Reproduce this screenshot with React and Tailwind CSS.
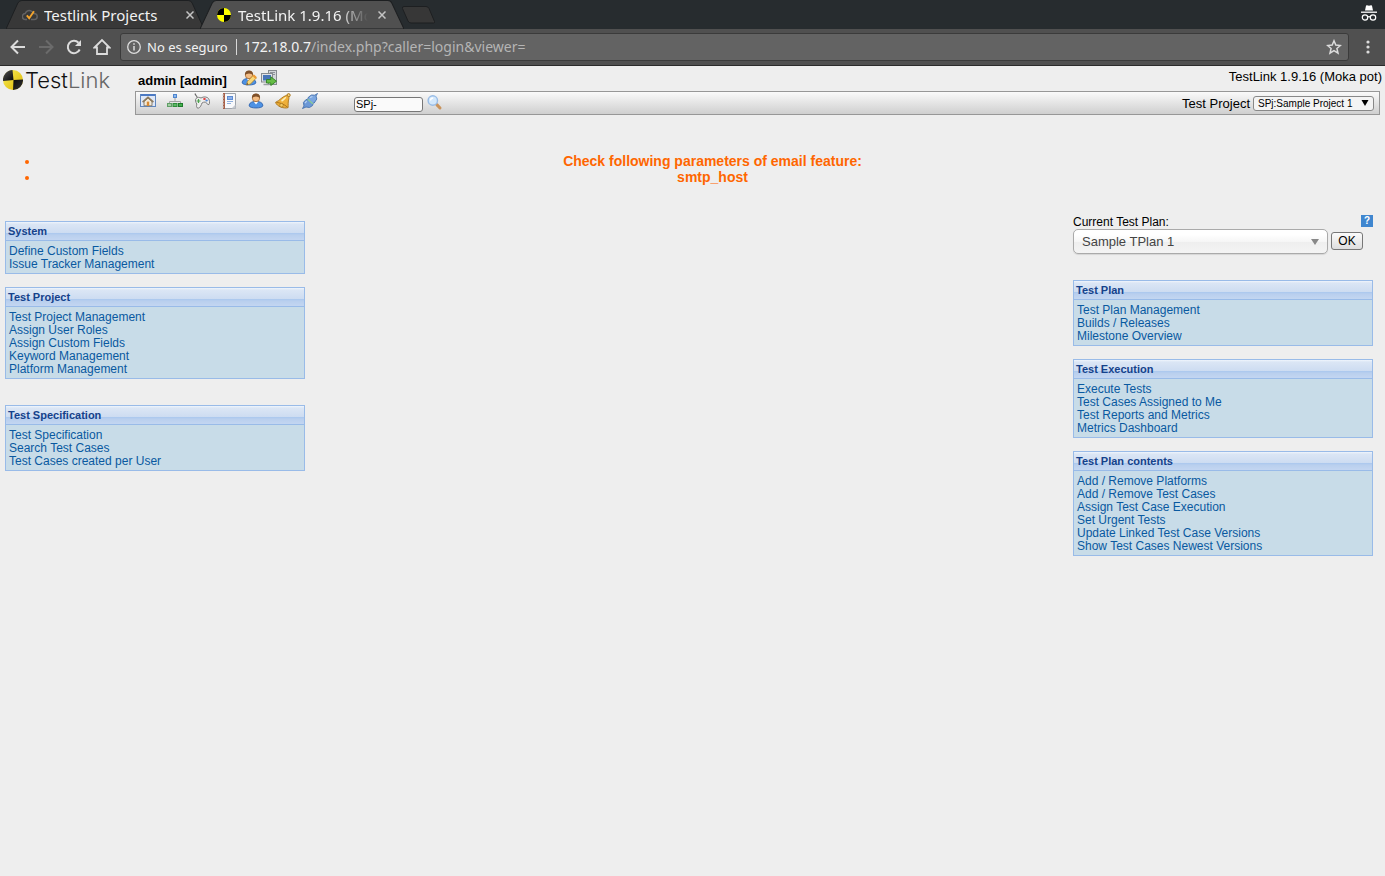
import React from 'react';

const icon = 'block h-4 w-4 shrink-0';

function HomeIcon() {
  return (
    <svg className={icon} viewBox="0 0 16 16">
      <rect x=".5" y="1.500" width="15" height="12" fill="#dfe8f7" stroke="#5f86bf" />
      <rect x="1" y="1" width="14" height="2" fill="#4c7ac4" />
      <path d="M4 8.500v4.300h8V8.500L8 5z" fill="#f3ead8" stroke="#7d7468" strokeWidth=".9" />
      <path d="M2.600 9.200L8 4.300l5.400 4.900" fill="none" stroke="#8d7a5e" strokeWidth="1.700" />
      <rect x="6.800" y="8.600" width="2.400" height="4.400" fill="#d98b34" />
    </svg>
  );
}
function TreeIcon() {
  return (
    <svg className={icon} viewBox="0 0 16 16">
      <path d="M8 5v3M2.500 10V8.500h11V10" fill="none" stroke="#a3a3a3" />
      <rect x="6.500" y="1.500" width="3" height="3" fill="#8db9ee" stroke="#4f86cf" />
      <rect x=".5" y="10.500" width="4" height="3" fill="#a3cda3" stroke="#5f9f66" />
      <rect x="6" y="10.500" width="4" height="3" fill="#5db965" stroke="#2f8c3b" />
      <rect x="11.500" y="10.500" width="4" height="3" fill="#43b04d" stroke="#1f7a2b" />
    </svg>
  );
}
function GamepadIcon() {
  return (
    <svg className={icon} viewBox="0 0 16 16">
      <path d="M3.500 5C3 3 1.500 2.500 1 .5" fill="none" stroke="#666" strokeWidth="1.100" />
      <path d="M2 5.500C3.500 3.800 5.500 4.300 7 5c2.500-1.700 6-1.300 7.500.5 1.300 2 1.400 4.700.5 6-1.400.8-2.300-1.500-3.500-2.500-1.500 0-2.600.3-3.500 1-.7 1.800-1.500 4.800-3.800 5.200-2.200 0-1.700-2.700-1.400-4.200C1.500 9 1 7 2 5.500z" fill="#eee" stroke="#7f7f7f" />
      <path d="M4.500 6v4M2.500 8h4" stroke="#4da34d" strokeWidth="1.200" />
      <ellipse cx="10.500" cy="6" rx="1.400" ry="1" fill="#e33b3b" />
      <ellipse cx="12.600" cy="7.500" rx="1.200" ry=".9" fill="#4d86d8" />
    </svg>
  );
}
function NotebookIcon() {
  return (
    <svg className={icon} viewBox="0 0 16 16">
      <path d="M2.500 .5h12v15h-12z" fill="#f8f9fb" stroke="#9da3ab" />
      <path d="M10.500 15.500l4-4v4z" fill="#c5c9cf" />
      <rect x="2" y="0" width="2" height="16" fill="#a8614a" />
      <path d="M1 2h2M1 5h2M1 8h2M1 11h2M1 14h2" stroke="#cfcfcf" />
      <rect x="6.500" y="3.500" width="5" height="3" fill="#8db2ea" stroke="#5d8bd3" />
      <path d="M6 8.500h6M6 10.500h4" stroke="#8fb0de" />
    </svg>
  );
}
function Person() {
  return (
    <>
      <path d="M1.200 13c0-3 2-4.500 6.800-4.500s6.800 1.500 6.800 4.500c-1 2.600-12.600 2.600-13.600 0z" fill="#4e92e4" stroke="#2c62ae" strokeWidth=".9" />
      <path d="M5.800 8.800L8 11.400l2.200-2.600z" fill="#fff" />
      <circle cx="8" cy="5" r="3.700" fill="#f4bd84" stroke="#a5672d" strokeWidth=".8" />
      <path d="M4 5.300C3.600 1.500 6 .4 8 .4s4.400 1.100 4 4.900C11 4 9.500 4.200 8 3.600 6.500 4.200 5 4 4 5.300z" fill="#80512a" />
    </>
  );
}
function UserIcon() {
  return <svg className={icon} viewBox="0 0 16 16"><Person /></svg>;
}
function UserEditIcon() {
  return (
    <svg className={icon} viewBox="0 0 16 16">
      <Person />
      <path d="M5.500 15l1-3.600L12.500 5l3 2.800L9.500 14z" fill="#f9d777" stroke="#b5852a" strokeWidth=".8" />
      <path d="M11.500 6l1.500-1.600 2.700 2.600-1.500 1.700z" fill="#ee9a35" />
      <path d="M5.500 15l.6-1.900 1.300 1.200z" fill="#444" />
    </svg>
  );
}
function LogoutIcon() {
  return (
    <svg className={icon} viewBox="0 0 16 16">
      <rect x="7.500" y=".5" width="8" height="14" fill="#d3d6d9" stroke="#868b90" />
      <path d="M9 2.500h5M9 4.500h5" stroke="#8c9299" />
      <rect x=".5" y="3.500" width="11" height="8.500" fill="#dfe2e5" stroke="#868b90" />
      <rect x="2" y="5" width="8" height="5.500" fill="#4775b8" />
      <path d="M2.500 14.500h6" stroke="#9a9ea3" strokeWidth="1.500" />
      <path d="M5.500 9.500h4.300V6.800l5.700 4.400-5.700 4.300V13H5.500z" fill="#66bd45" stroke="#2f8120" strokeWidth=".9" />
    </svg>
  );
}
function BellIcon() {
  return (
    <svg className={icon} viewBox="0 0 16 16">
      <circle cx="13.600" cy="2.200" r="1.600" fill="#f6d27a" stroke="#a36f17" strokeWidth=".9" />
      <path d="M.6 9.300C5 7.500 7 3.500 11.500 2.400c1.800.4 2.700 1.600 2.400 3.200-1 3-.6 6.500-.8 9C9.500 16 1.500 13.500.6 9.300z" fill="#eeb03a" stroke="#a8741b" strokeWidth=".9" />
      <path d="M1.500 9.500c3 0 8 1.800 11 4.700" fill="none" stroke="#b17516" />
      <circle cx="6.500" cy="12.200" r="1.800" fill="#f3cb63" stroke="#a8741b" strokeWidth=".7" />
      <path d="M6.500 8c2-1 2.800-2.800 4.500-3.600" fill="none" stroke="#fdeeb8" strokeWidth="1.600" />
    </svg>
  );
}
function PlugIcon() {
  return (
    <svg className={icon} viewBox="0 0 16 16">
      <path d="M.5 15.500L2 13l-.6-3.500L4 6.500l2.300.2L11 11l-.5 1.600-3 1.900-3.500-.5z" fill="#6c98d6" stroke="#4470ae" strokeWidth=".9" />
      <path d="M15.500 .5L14 3l.8 3-2.600 4-1.700.4L5.800 5.800l.7-1.700L9.500 2l3.200.2z" fill="#7ba6e0" stroke="#4470ae" strokeWidth=".9" />
      <path d="M5.800 6.200l5 4.600" stroke="#8fcf96" strokeWidth="1.200" />
      <path d="M3 10l1.700-1.800M8 4.500l2.500-1" stroke="#b9d3f3" strokeWidth="1.200" />
    </svg>
  );
}
function SearchIcon() {
  return (
    <svg className={icon} viewBox="0 0 16 16">
      <path d="M9.800 9.600l3.200 3.400" stroke="#c9935c" strokeWidth="3" strokeLinecap="round" />
      <circle cx="5.800" cy="5.500" r="4.700" fill="#d3e8fc" stroke="#98bce6" strokeWidth="1.400" />
      <path d="M3.500 5.500C3.600 4 4.600 3 6.200 3" fill="none" stroke="#fff" strokeWidth="1.300" />
    </svg>
  );
}
function Target({ className }) {
  return (
    <svg className={className} viewBox="0 0 20 20">
      <defs>
        <linearGradient id="targetGold" x1="0" y1="0" x2="1" y2="1"><stop offset="0" stopColor="#fbee5a" /><stop offset="1" stopColor="#d9b400" /></linearGradient>
        <linearGradient id="targetDark" x1="0" y1="0" x2="1" y2="1"><stop offset="0" stopColor="#555" /><stop offset=".5" stopColor="#0c0c0c" /><stop offset="1" stopColor="#333" /></linearGradient>
      </defs>
      <circle cx="10" cy="10" r="10" fill="url(#targetGold)" />
      <path d="M10.500 10L9.500 0A10 10 0 0 0 0 11zM10.500 10l-.5 10A10 10 0 0 0 20 9.500z" fill="url(#targetDark)" />
    </svg>
  );
}
function Favicon() {
  return (
    <svg className="block h-4 w-4 shrink-0" viewBox="0 0 16 16">
      <circle cx="8" cy="8" r="7" fill="#ff0" />
      <path d="M8 8V1a7 7 0 0 0-7 7zM8 8v7a7 7 0 0 0 7-7z" fill="#000" />
    </svg>
  );
}
function CloudFavicon() {
  return (
    <svg className="block h-4 w-4 shrink-0" viewBox="0 0 16 16">
      <path d="M5 12.500H3.500a3 3 0 0 1-.3-6C3.800 4.500 6 3 8.500 3.700c1.500.4 2.500 1.300 3 2.800 2-.2 3.700 1 3.700 3s-1.500 3-3 3H9" fill="none" stroke="#626264" strokeWidth="1.500" />
      <path d="M4.800 8.300l2.400 2.900L12 4.300" fill="none" stroke="#f2a32c" strokeWidth="1.900" />
    </svg>
  );
}
function CloseIcon() {
  return <svg className="block h-2 w-2" viewBox="0 0 8 8"><path d="M.5 .5l7 7M7.500 .5l-7 7" stroke="#c4c4c4" strokeWidth="1.500" /></svg>;
}

function Tab({ active, width, favicon, children }) {
  return (
    <div className={`relative flex h-[29px] items-center ${width} ${active ? 'z-10 -ml-1' : ''}`}>
      <svg className="absolute inset-0 h-full w-full" viewBox="0 0 200 29" preserveAspectRatio="none">
        <path d="M0 29L12 3Q13.500 .5 16 .5H184Q187 .5 188 3L200 29z" fill={active ? '#505050' : '#383838'} stroke="#1d1f21" />
      </svg>
      <div className={`relative flex w-full items-center pl-4 ${active ? 'pr-4' : 'pr-2'}`}>
        {favicon}
        <span className={`ml-1.5 flex-1 overflow-hidden font-['Noto_Sans'] text-[15px] leading-5 whitespace-nowrap text-[#f2f2f2] ${active ? '[mask-image:linear-gradient(to_right,black_78%,transparent)]' : ''}`}>{children}</span>
        <button type="button" aria-label="Close tab" className="ml-2 p-0.5"><CloseIcon /></button>
      </div>
    </div>
  );
}

function Browser() {
  const stroke = { fill: 'none', stroke: '#dcdcdc', strokeWidth: 2 };
  return (
    <header className="font-['Noto_Sans',sans-serif]">
      <div className="flex h-[29px] items-center bg-[#272c2f] pr-[7px] pl-1.5">
        <Tab width="w-[198px]" favicon={<CloudFavicon />}>Testlink Projects</Tab>
        <Tab active width="w-[204px]" favicon={<Favicon />}>TestLink 1.9.16 (Moka pot)</Tab>
        <button type="button" aria-label="New tab" className="-ml-1">
          <svg className="block h-[18px] w-[36px]" viewBox="0 0 36 18"><path d="M4 .5h22q2 0 3 2l5.500 13q.5 1.500-1 1.500H11q-2 0-3-2L2.500 2.500Q2 .5 4 .5z" fill="#373737" stroke="#1d1f21" /></svg>
        </button>
        <svg className="mb-1 ml-auto block h-[18px] w-[18px]" viewBox="0 0 18 18">
          <path d="M5 6.500L6 1.800Q6.200 1 7 1.200L9 1.700 11 1.200Q11.800 1 12 1.800L13 6.500z" fill="#fff" />
          <path d="M1 8.200h16" stroke="#fff" strokeWidth="1.300" />
          <g fill="none" stroke="#fff" strokeWidth="1.200"><circle cx="5" cy="13.500" r="2.700" /><circle cx="13" cy="13.500" r="2.700" /><path d="M7.700 13q1.300-.8 2.600 0" /></g>
        </svg>
      </div>
      <div className="flex h-[37px] items-center border-b border-[#2b2b2b] bg-[#505050] pr-[7px] pl-[10px]">
        <button type="button" aria-label="Back"><svg className="block h-4 w-4" viewBox="0 0 16 16"><path d="M15 8H2M8 1.500L1.500 8 8 14.500" {...stroke} /></svg></button>
        <button type="button" aria-label="Forward" className="ml-3"><svg className="block h-4 w-4" viewBox="0 0 16 16"><path d="M1 8h13M8 1.500L14.500 8 8 14.500" fill="none" stroke="#6b6b6b" strokeWidth="2" /></svg></button>
        <button type="button" aria-label="Reload" className="ml-3"><svg className="block h-4 w-4" viewBox="0 0 16 16"><path d="M13.700 10.500A6.200 6.200 0 1 1 12.500 3.700" {...stroke} /><path d="M15 1v6H9z" fill="#dcdcdc" /></svg></button>
        <button type="button" aria-label="Home" className="ml-[11px]"><svg className="block h-[18px] w-[18px]" viewBox="0 0 18 18"><path d="M1.500 9.500L9 2l7.500 7.500H14V16H4V9.500z" {...stroke} strokeWidth="1.800" /></svg></button>
        <label className="ml-[9px] flex h-7 flex-1 items-center rounded-[3px] border border-[#3b3b3b] bg-[#636363] px-1.5 text-[14px] leading-5">
          <svg className="block h-[14px] w-[14px] shrink-0" viewBox="0 0 14 14"><circle cx="7" cy="7" r="6.300" fill="none" stroke="#ddd" strokeWidth="1.300" /><path d="M7 6v4.500M7 3.300v1.500" stroke="#ddd" strokeWidth="1.500" /></svg>
          <span className="ml-1.5 text-[13px] whitespace-nowrap text-[#f2f2f2]">No es seguro</span>
          <span className="mr-[7px] ml-2 h-4 w-px bg-[#d8d8d8]" />
          <span className="flex-1 text-[#b5b5b5]"><span className="text-[#f2f2f2]">172.18.0.7</span>/index.php?caller=login&amp;viewer=</span>
          <svg className="block h-4 w-4" viewBox="0 0 16 16"><path d="M8 1.800l1.800 4.300 4.600.4-3.500 3 1.100 4.600L8 11.600l-4 2.500 1.100-4.600-3.500-3 4.600-.4z" fill="none" stroke="#dcdcdc" strokeWidth="1.500" /></svg>
        </label>
        <button type="button" aria-label="Menu" className="ml-[9px] px-1"><svg className="block h-4 w-3" viewBox="0 0 12 16"><g fill="#dcdcdc"><circle cx="6" cy="3" r="1.600" /><circle cx="6" cy="8" r="1.600" /><circle cx="6" cy="13" r="1.600" /></g></svg></button>
      </div>
    </header>
  );
}

function Panel({ title, items }) {
  return (
    <section className="border border-[#99bbe8] bg-[#c8dce8]">
      <h2 className="h-[19px] border-b border-[#99bbe8] bg-[linear-gradient(#f0f5fc_0,#dbe6f5_2px,#cddcf1_11px,#a9c7ee_11px,#b9cfee_13px,#c3d6f1)] px-0.5 text-[11px] leading-[19px] font-bold text-[#15428b]">{title}</h2>
      <ul className="px-[3px] pt-1 pb-0.5 text-[12px] leading-[13px] text-[#0959a0]">
        {items.map((item) => <li key={item}><a href="#">{item}</a></li>)}
      </ul>
    </section>
  );
}

const nav = [
  ['Home', HomeIcon], ['Test specification', TreeIcon], ['Execute', GamepadIcon], ['Results', NotebookIcon],
  ['Users', UserIcon], ['Events', BellIcon], ['Plugins', PlugIcon],
];

export default function App() {
  return (
    <div className="min-h-screen bg-[#eee] font-['Liberation_Sans',Arial,sans-serif] text-[13px] leading-4 text-black">
      <Browser />
      <div className="flex">
        <a href="#" className="flex h-7 w-[135px] items-center pl-[3px]">
          <Target className="block h-5 w-5" />
          <span className="ml-0.5 font-['Inter'] text-[22px] leading-7 font-light text-[#111]">Test<span className="text-[#666]">Link</span></span>
        </a>
        <div className="flex-1 pr-[5px]">
          <div className="flex h-[25px] pl-[3px]">
            <span className="mt-[7px] font-bold">admin [admin]</span>
            <a href="#" aria-label="My settings" className="mt-1 ml-[14px]"><UserEditIcon /></a>
            <a href="#" aria-label="Logout" className="mt-1 ml-1"><LogoutIcon /></a>
            <span className="mt-[3px] -mr-0.5 ml-auto">TestLink 1.9.16 (Moka pot)</span>
          </div>
          <div className="flex h-6 items-center border border-[#979797] bg-[linear-gradient(#fafafa,#cfcfcf)] pr-[5px] pl-1">
            <nav className="mb-1 flex gap-[11px]">
              {nav.map(([name, Icon]) => <a key={name} href="#" aria-label={name}><Icon /></a>)}
            </nav>
            <input aria-label="Test case" defaultValue="SPj-" className="mt-0.5 ml-9 h-[15px] w-[69px] rounded-[3px] border border-[#777] bg-[#fafafa] px-px text-[11px]" />
            <button type="button" aria-label="Search" className="ml-1"><SearchIcon /></button>
            <label htmlFor="project" className="mt-0.5 ml-auto">Test Project</label>
            <span className="relative ml-[3px] flex">
              <select id="project" className="h-[15px] w-[121px] appearance-none rounded-[3px] border border-[#888] bg-[#f4f4f4] pl-1 text-[10px] leading-[13px]">
                <option>SPj:Sample Project 1</option>
              </select>
              <svg className="pointer-events-none absolute top-1 right-[5px] h-1.5 w-2" viewBox="0 0 8 6"><path d="M.5 0h7L4 6z" fill="#000" /></svg>
            </span>
          </div>
        </div>
      </div>
      <ul className="mt-[38px] list-disc pl-10 text-center text-[14px] leading-4 font-bold text-[#ff6600]">
        <li>Check following parameters of email feature:</li>
        <li>smtp_host</li>
      </ul>
      <main className="mt-[29px] flex justify-between pr-3 pl-[5px]">
        <div className="mt-[7px] w-[300px]">
          <div className="flex flex-col gap-[13px]">
            <Panel title="System" items={['Define Custom Fields', 'Issue Tracker Management']} />
            <Panel title="Test Project" items={['Test Project Management', 'Assign User Roles', 'Assign Custom Fields', 'Keyword Management', 'Platform Management']} />
          </div>
          <div className="mt-[26px]">
            <Panel title="Test Specification" items={['Test Specification', 'Search Test Cases', 'Test Cases created per User']} />
          </div>
        </div>
        <div className="w-[300px]">
          <div className="flex h-[15px] justify-between">
            <label htmlFor="plan" className="text-[12px]">Current Test Plan:</label>
            <a href="#" aria-label="Help" className="mt-px grid h-3 w-3 place-items-center bg-[#3f86cf] text-[10px] leading-3 font-bold text-white">?</a>
          </div>
          <div className="flex items-start">
            <span className="relative flex">
              <select id="plan" className="h-[25px] w-[255px] appearance-none rounded-[5px] border border-[#aaa] bg-[linear-gradient(#fff_20%,#f6f6f6_50%,#eee_52%,#f4f4f4)] pl-2 text-[13px] text-[#444] shadow-[0_1px_1px_rgba(0,0,0,0.1)]">
                <option>Sample TPlan 1</option>
              </select>
              <svg className="pointer-events-none absolute top-[10px] right-[9px] h-1.5 w-2" viewBox="0 0 8 6"><path d="M0 0h8L4 6z" fill="#888" /></svg>
            </span>
            <button type="button" className="mt-[3px] ml-[3px] h-[18px] w-8 rounded-[3px] border border-[#777] bg-[linear-gradient(#fbfbfb,#dedede)] text-[12px] leading-4">OK</button>
          </div>
          <div className="mt-[26px] flex flex-col gap-[13px]">
            <Panel title="Test Plan" items={['Test Plan Management', 'Builds / Releases', 'Milestone Overview']} />
            <Panel title="Test Execution" items={['Execute Tests', 'Test Cases Assigned to Me', 'Test Reports and Metrics', 'Metrics Dashboard']} />
            <Panel title="Test Plan contents" items={['Add / Remove Platforms', 'Add / Remove Test Cases', 'Assign Test Case Execution', 'Set Urgent Tests', 'Update Linked Test Case Versions', 'Show Test Cases Newest Versions']} />
          </div>
        </div>
      </main>
    </div>
  );
}
